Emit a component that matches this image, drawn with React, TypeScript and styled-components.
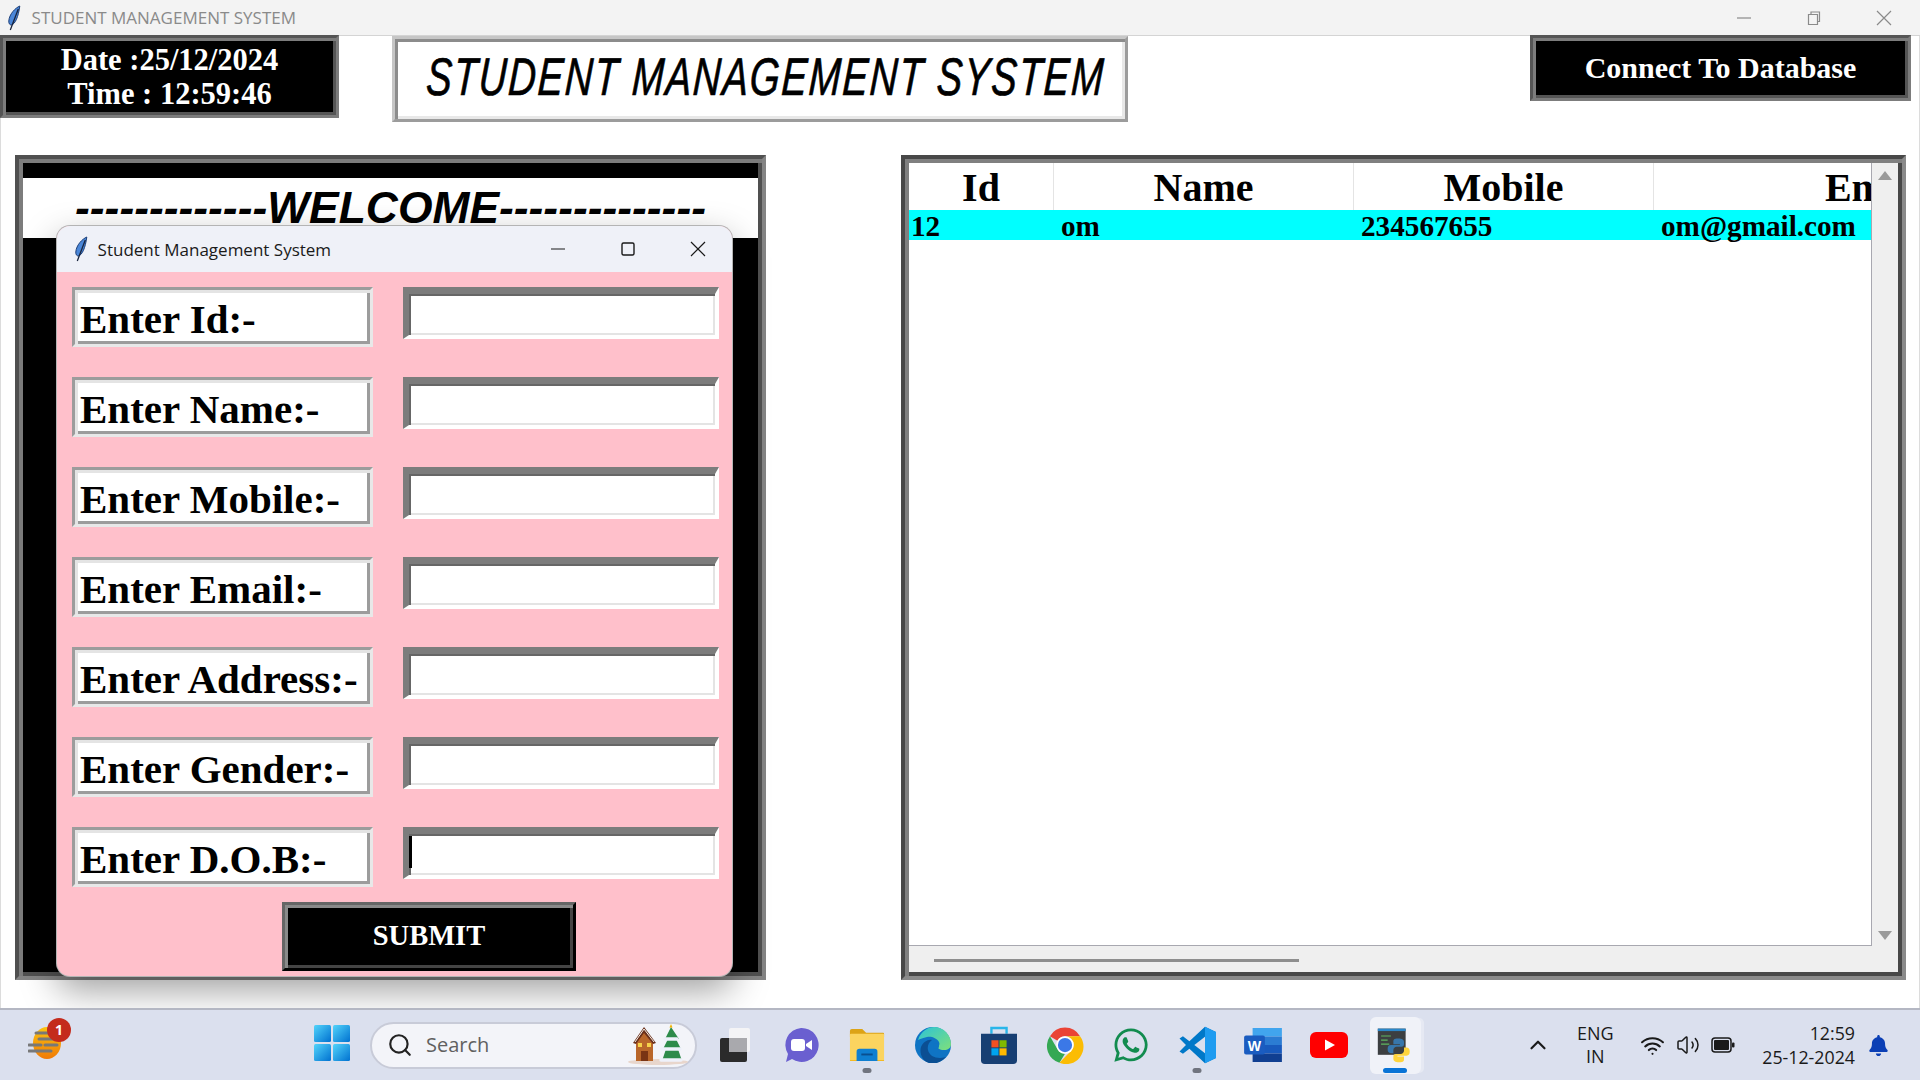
import { Fragment } from "react";
import styled, { createGlobalStyle, css } from "styled-components";
import { ChevronUp, Search, Volume2, Wifi } from "lucide-react";
import { FaWhatsapp, FaBell } from "react-icons/fa";

const GlobalStyle = createGlobalStyle`
  html, body { margin: 0; padding: 0; background: #fff; overflow: hidden; }
  * { box-sizing: border-box; }
`;

const SERIF = `"Liberation Serif", "Times New Roman", serif`;
const UI = `"Open Sans", "Noto Sans", sans-serif`;

// two tone tk style border: outer ring is the border, inner ring an inset shadow
const bevel = (w: number, outerTL: string, outerBR: string, innerTL: string, innerBR: string) => css`
  border: ${w}px solid;
  border-color: ${outerTL} ${outerBR} ${outerBR} ${outerTL};
  box-shadow: inset ${w}px ${w}px 0 ${innerTL}, inset -${w}px -${w}px 0 ${innerBR};
`;

const Page = styled.div`
  width: 1920px;
  height: 1080px;
  display: flex;
  flex-direction: column;
  font-family: ${SERIF};
`;

const TitleBar = styled.div`
  height: 36px;
  flex: none;
  background: #f3f3f3;
  border-bottom: 1px solid #d4d4d4;
  display: flex;
  align-items: center;
  padding-left: 6px;
  color: #8a8a8a;
  font: 400 17px/1 ${UI};
`;

const TitleText = styled.span`
  margin-left: 10px;
`;

const WindowControls = styled.div`
  margin-left: auto;
  display: flex;
  align-items: center;
  gap: 54px;
  padding-right: 28px;
  color: #888;
`;

const Main = styled.div`
  flex: 1;
  position: relative;
  background: #fff;
  border-left: 1px solid #dcdcdc;
  border-right: 1px solid #dcdcdc;
  min-height: 0;
`;

const TopRow = styled.div`
  display: flex;
  align-items: flex-start;
  padding-right: 8px;
`;

const ClockBox = styled.div`
  width: 339px;
  height: 83px;
  margin-top: -1px;
  margin-left: -1px;
  background: #000;
  ${bevel(3, "#555", "#7c7c7c", "#7c7c7c", "#555")}
  color: #fff;
  font-weight: 700;
  font-size: 30.5px;
  line-height: 34px;
  text-align: center;
  display: flex;
  flex-direction: column;
  justify-content: center;
`;

const AppHeading = styled.div`
  width: 736px;
  height: 86px;
  margin-left: 53px;
  background: #fff;
  ${bevel(3, "#c6c6c6", "#9c9c9c", "#8c8c8c", "#e8e8e8")}
  display: flex;
  align-items: center;
  justify-content: center;
  overflow: hidden;
`;

const HeadingText = styled.span`
  font: italic 400 46px/1 "Liberation Sans Narrow", "Liberation Sans", sans-serif;
  color: #000;
  white-space: nowrap;
  transform: translate(6px, -2px) scaleX(0.836) scaleY(1.15) skewX(-4deg);
  letter-spacing: 2px;
  -webkit-text-stroke: 0.6px #000;
`;

const ConnectButton = styled.button`
  margin-left: auto;
  margin-top: -1px;
  width: 381px;
  height: 66px;
  padding-bottom: 2px;
  background: #000;
  color: #fff;
  ${bevel(3, "#555", "#7c7c7c", "#7c7c7c", "#555")}
  font: 700 30px/1 ${SERIF};
`;

const PanelRow = styled.div`
  display: flex;
  align-items: flex-start;
  padding: 33px 0 0 14px;
`;

const WelcomeFrame = styled.div`
  width: 751px;
  height: 825px;
  background: #000;
  ${bevel(4, "#505050", "#848484", "#7c7c7c", "#505050")}
  padding-top: 19px;
  flex: none;
`;

const WelcomeStrip = styled.div`
  height: 60px;
  margin: 0 4px;
  background: #fff;
  text-align: center;
  font: italic 700 44.4px/60px "Liberation Sans", Arial, sans-serif;
  color: #000;
  white-space: nowrap;
  overflow: hidden;
`;

const TableFrame = styled.div`
  width: 1005px;
  height: 825px;
  margin-left: 135px;
  flex: none;
  ${bevel(4, "#484848", "#8a8a8a", "#808080", "#484848")}
  background: #efefef;
  padding: 4px;
  display: grid;
  grid-template-columns: minmax(0, 1fr) 26px;
  grid-template-rows: minmax(0, 1fr) 26px;
`;

const TableArea = styled.div`
  background: #fff;
  border-right: 1px solid #a8a8b0;
  border-bottom: 1px solid #a8a8b0;
  overflow: hidden;
  min-width: 0;
`;

const HeaderRow = styled.div`
  display: flex;
  height: 47px;
  overflow: hidden;
`;

const HeaderCell = styled.div<{ $w: number }>`
  width: ${(p) => p.$w}px;
  flex: none;
  border-right: 1px solid #e4e4e4;
  text-align: center;
  font: 700 40px/49px ${SERIF};
  color: #000;
  white-space: nowrap;
`;

const DataRow = styled.div`
  display: flex;
  height: 30px;
  background: #00ffff;
`;

const DataCell = styled.div<{ $w: number; $pad: number }>`
  width: ${(p) => p.$w}px;
  flex: none;
  padding-left: ${(p) => p.$pad}px;
  font: 700 29.2px/33px ${SERIF};
  color: #000;
  white-space: nowrap;
`;

const VScroll = styled.div`
  display: flex;
  flex-direction: column;
  justify-content: space-between;
  align-items: center;
  padding: 8px 0 6px;
`;

const Arrow = styled.div<{ $up?: boolean }>`
  width: 0;
  height: 0;
  border-left: 7px solid transparent;
  border-right: 7px solid transparent;
  ${(p) => (p.$up ? "border-bottom: 9px solid #9a9a9a;" : "border-top: 9px solid #9a9a9a;")}
`;

const HScroll = styled.div`
  grid-column: 1 / 3;
  padding: 13px 0 0 25px;
`;

const HThumb = styled.div`
  width: 365px;
  height: 3px;
  background: #8e8e8e;
`;

const Dialog = styled.div`
  position: absolute;
  left: 56px;
  top: 190px;
  width: 675px;
  height: 750px;
  border-radius: 13px;
  overflow: hidden;
  background: #ffc0cb;
  box-shadow: 0 0 0 1px #b4b4b4, 0 14px 36px rgba(0, 0, 0, 0.38);
`;

const DialogBar = styled.div`
  height: 46px;
  background: #eff1f8;
  display: flex;
  align-items: center;
  padding-left: 16px;
  font: 400 17px/1 ${UI};
  color: #1a1a1a;
`;

const DialogTitle = styled.span`
  margin-left: 9px;
`;

const DialogControls = styled.div`
  margin-left: auto;
  display: flex;
  align-items: center;
  gap: 54px;
  padding-right: 26px;
`;

const FormGrid = styled.div`
  display: grid;
  grid-template-columns: 301px 316px;
  column-gap: 30px;
  row-gap: 30px;
  grid-auto-rows: 60px;
  padding: 15px 0 0 15px;
`;

const FieldLabel = styled.div`
  background: #fff;
  ${bevel(3, "#9c9c9c", "#e8e8e8", "#e4e4e4", "#9c9c9c")}
  font: 700 41px/54px ${SERIF};
  padding: 2px 0 0 5px;
  color: #000;
  white-space: nowrap;
`;

const FieldInput = styled.div<{ $caret?: boolean }>`
  height: 52px;
  background: #fff;
  border-style: solid;
  border-width: 7px 4px 4px 6px;
  border-color: #7c7c7c #fff #fff #7c7c7c;
  box-shadow: inset 2px 2px 0 #666, inset -2px -2px 0 #e4e4e4;
  position: relative;
  &::after {
    content: "";
    display: ${(p) => (p.$caret ? "block" : "none")};
    position: absolute;
    left: 0;
    top: 2px;
    width: 3px;
    height: 32px;
    background: #000;
  }
`;

const SubmitButton = styled.button`
  display: block;
  margin: 15px 0 0 225px;
  width: 294px;
  height: 69px;
  background: #000;
  color: #fff;
  border-style: solid;
  border-width: 3px;
  border-color: #666 #000 #000 #666;
  box-shadow: inset 3px 3px 0 #8a8a8a, inset -3px -3px 0 #444;
  font: 700 28.5px/1 ${SERIF};
`;

const Taskbar = styled.div`
  height: 72px;
  flex: none;
  background: #dbe0ee;
  border-top: 2px solid #b4b7c3;
  display: flex;
  align-items: center;
  position: relative;
`;

const WeatherSlot = styled.div`
  width: 314px;
  padding-left: 28px;
  flex: none;
  position: relative;
`;

const Badge = styled.span`
  position: absolute;
  left: 47px;
  top: -8px;
  width: 24px;
  height: 24px;
  border-radius: 50%;
  background: #c42b1c;
  color: #fff;
  font: 700 14px/24px ${UI};
  text-align: center;
`;

const StartSlot = styled.div`
  width: 56px;
  flex: none;
`;

const SearchPill = styled.div`
  width: 327px;
  height: 47px;
  flex: none;
  background: #f3f4f9;
  border: 2px solid #c8cbd8;
  border-radius: 24px;
  display: flex;
  align-items: center;
  padding: 0 0 0 15px;
  color: #606060;
  font: 400 20px/1 ${UI};
  gap: 13px;
`;

const SearchArt = styled.div`
  margin-left: auto;
  margin-right: 6px;
  display: flex;
`;

const AppSlots = styled.div`
  display: flex;
  margin-left: 5px;
`;

const AppSlot = styled.div`
  width: 66px;
  height: 57px;
  flex: none;
  display: flex;
  align-items: center;
  justify-content: center;
  position: relative;
`;

const ActiveTile = styled.div`
  width: 51px;
  height: 57px;
  border-radius: 6px;
  background: #f0f2f8;
  box-shadow: 4px 0 0 -1px #e6e9f3;
  display: flex;
  align-items: center;
  justify-content: center;
`;

const RunDot = styled.span<{ $active?: boolean }>`
  position: absolute;
  bottom: 1px;
  left: 50%;
  transform: translateX(-50%);
  width: ${(p) => (p.$active ? 24 : 9)}px;
  height: 5px;
  border-radius: 3px;
  background: ${(p) => (p.$active ? "#0a74d6" : "#70747f")};
`;

const Tray = styled.div`
  margin-left: auto;
  display: flex;
  align-items: center;
  padding-right: 31px;
  color: #1a1a1a;
`;

const LangBox = styled.div`
  margin-left: 14px;
  width: 60px;
  text-align: center;
  font: 400 18px/23px ${UI};
`;

const TrayIcons = styled.div`
  margin-left: 15px;
  display: flex;
  align-items: center;
  gap: 11px;
`;

const TrayClock = styled.div`
  margin-left: 27px;
  text-align: right;
  font: 400 17.8px/24px ${UI};
`;

const BellWrap = styled.div`
  margin-left: 13px;
  display: flex;
  color: #0b3fb5;
`;

function Feather({ size = 26 }: { size?: number }) {
  return (
    <svg width={size * 0.6} height={size} viewBox="0 0 15 26">
      <path d="M13.5 1C9 3 3 9 2.5 16c-.2 2.5 1 4 2.5 4 4-1 7-8 8.500-19z" fill="#4a86d8" stroke="#1d3f78" strokeWidth="1" />
      <path d="M12 4 4 25" stroke="#17233d" strokeWidth="1.300" fill="none" />
    </svg>
  );
}

function WinStart() {
  return (
    <svg width="36" height="36" viewBox="0 0 36 36">
      <defs>
        <linearGradient id="ws" x1="0" y1="0" x2="1" y2="1">
          <stop offset="0" stopColor="#52d4fb" />
          <stop offset="1" stopColor="#0071d0" />
        </linearGradient>
      </defs>
      <rect x="0" y="0" width="17" height="17" rx="1.500" fill="url(#ws)" />
      <rect x="19" y="0" width="17" height="17" rx="1.500" fill="url(#ws)" />
      <rect x="0" y="19" width="17" height="17" rx="1.500" fill="url(#ws)" />
      <rect x="19" y="19" width="17" height="17" rx="1.500" fill="url(#ws)" />
    </svg>
  );
}

function WeatherIcon() {
  return (
    <svg width="34" height="34" viewBox="0 0 34 34">
      <defs>
        <linearGradient id="wo" x1="0" y1="0" x2="0" y2="1">
          <stop offset="0" stopColor="#fbc310" />
          <stop offset="1" stopColor="#f07a06" />
        </linearGradient>
      </defs>
      <ellipse cx="19" cy="17" rx="14" ry="16" fill="url(#wo)" />
      <g stroke="#787878" strokeWidth="3" strokeLinecap="round">
        <path d="M8 7h14M11 13h20M1 19h12M17 19h12M1 25h22" />
      </g>
    </svg>
  );
}

function HolidayArt() {
  return (
    <svg width="62" height="42" viewBox="0 0 62 42">
      <ellipse cx="31" cy="38" rx="30" ry="3" fill="#e8d6cc" />
      <path d="M9 17 17 6l9 11v20H9z" fill="#b9662a" />
      <path d="M6 19 17 3l12 16-3 1L17 9 9 20z" fill="#6b2f1a" />
      <path d="M8 18 17 5l10 13" fill="none" stroke="#f3efe9" strokeWidth="1" />
      <rect x="14" y="27" width="7" height="10" fill="#7a3414" />
      <rect x="11" y="19" width="4" height="4" fill="#f6d24a" />
      <rect x="20" y="19" width="4" height="4" fill="#f6d24a" />
      <path d="M44 3 38 15h3l-5 10h3l-4 12h20l-4-12h3l-5-10h3z" fill="#2e8b4a" />
      <path d="M38 15h12M35 25h18M34 36h20" stroke="#eef1fa" strokeWidth="3.500" strokeLinecap="round" />
      <path d="M44 0l1.500 3.500h-3z" fill="#f4b400" />
    </svg>
  );
}

function TaskView() {
  return (
    <svg width="30" height="34" viewBox="0 0 30 34">
      <rect x="0" y="10" width="27" height="24" rx="2" fill="#2b2b2b" />
      <rect x="9" y="0" width="21" height="24" rx="2" fill="#f4f4f6" />
      <rect x="9" y="10" width="18" height="14" fill="#a9a9ad" />
    </svg>
  );
}

function ChatIcon() {
  return (
    <svg width="36" height="36" viewBox="0 0 36 36">
      <path d="M18 1a17 17 0 1 1-9 31l-6 3 2-8A17 17 0 0 1 18 1z" fill="#6a5fd0" />
      <rect x="8" y="12" width="14" height="12" rx="3" fill="#fff" />
      <path d="M23 17l6-4v10l-6-4z" fill="#fff" />
    </svg>
  );
}

function FolderIcon() {
  return (
    <svg width="36" height="36" viewBox="0 0 38 36">
      <path d="M1 3a2 2 0 0 1 2-2h11l4 4h18a1 1 0 0 1 1 1v4H1z" fill="#dca316" />
      <rect x="1" y="6" width="36" height="29" rx="1" fill="#fbd45f" />
      <path d="M1 34h36v1H1z" fill="#f2b10d" />
      <path d="M8 35V25a3 3 0 0 1 3-3h16a3 3 0 0 1 3 3v10z" fill="#0f7fd1" />
      <rect x="13" y="27" width="12" height="2" fill="#0a4f8f" />
    </svg>
  );
}

function EdgeIcon() {
  return (
    <svg width="36" height="36" viewBox="0 0 36 36">
      <defs>
        <linearGradient id="eg" x1="0" y1="0" x2="1" y2="1">
          <stop offset="0" stopColor="#2bc3d8" />
          <stop offset="1" stopColor="#7fe07a" />
        </linearGradient>
      </defs>
      <circle cx="18" cy="18" r="18" fill="#0f74c4" />
      <path d="M3 13C6 4 13 0 19 0c10 0 17 8 17 17 0 4-3 6-7 6-5 0-6-2-6-3 1-1 2-3 1-5-2-4-8-6-12-5-4 1-7 2-9 3z" fill="url(#eg)" />
      <path d="M14 36c-6-2-10-9-8-16 2-5 7-8 11-7-3 2-5 6-4 10 1 5 6 8 12 8 3 0 5-1 6-1-4 4-10 8-17 6z" fill="#0b4f93" />
      <circle cx="21" cy="19" r="3" fill="#0f74c4" />
    </svg>
  );
}

function StoreIcon() {
  return (
    <svg width="36" height="38" viewBox="0 0 38 40">
      <path d="M11 8V2h16v6" fill="none" stroke="#29b6ea" strokeWidth="2.500" />
      <path d="M0 8h38v28a4 4 0 0 1-4 4H4a4 4 0 0 1-4-4z" fill="#173f73" />
      <rect x="11" y="15" width="7.500" height="7.500" fill="#f25022" />
      <rect x="19.500" y="15" width="7.500" height="7.500" fill="#7fba00" />
      <rect x="11" y="23.500" width="7.500" height="7.500" fill="#00a4ef" />
      <rect x="19.500" y="23.500" width="7.500" height="7.500" fill="#ffb900" />
    </svg>
  );
}

function ChromeIcon() {
  return (
    <svg width="38" height="38" viewBox="0 0 48 48">
      <path d="M24 2A22 22 0 0 1 43 13H24a11 11 0 0 0-9.500 5.500L5 13A22 22 0 0 1 24 2z" fill="#ea4335" />
      <path d="M5 13l9.500 16.500A11 11 0 0 0 24 35l-7 11.500A22 22 0 0 1 5 13z" fill="#34a853" />
      <path d="M43 13A22 22 0 0 1 17 46.500L33.500 29.500A11 11 0 0 0 24 13z" fill="#fbbc04" />
      <circle cx="24" cy="24" r="11" fill="#fff" />
      <circle cx="24" cy="24" r="9" fill="#3b78e7" />
    </svg>
  );
}

function VsCodeIcon() {
  return (
    <svg width="38" height="38" viewBox="0 0 100 100">
      <path d="M71 2 100 16v68L71 98 30 60l-17 13-9-6 17-17L4 33l9-6 17 13z" fill="#0078c8" />
      <path d="M71 2 100 16v68L71 98z" fill="#1f9cf0" />
      <path d="M71 28 43 50l28 22z" fill="#dbe0ee" />
    </svg>
  );
}

function WordIcon() {
  return (
    <svg width="38" height="34" viewBox="0 0 40 36">
      <rect x="9" y="0" width="31" height="9" fill="#41a5ee" />
      <rect x="9" y="9" width="31" height="9" fill="#2b7cd3" />
      <rect x="9" y="18" width="31" height="9" fill="#185abd" />
      <rect x="9" y="27" width="31" height="9" fill="#103f91" />
      <rect x="0" y="8" width="22" height="20" rx="2" fill="#1a5cc0" />
      <text x="11" y="24" textAnchor="middle" fontFamily="Liberation Sans, sans-serif" fontWeight="700" fontSize="15" fill="#fff">W</text>
    </svg>
  );
}

function YoutubeIcon() {
  return (
    <svg width="38" height="26" viewBox="0 0 38 26">
      <rect width="38" height="26" rx="6" fill="#f00" />
      <path d="M15 7.500l10 5.500-10 5.500z" fill="#fff" />
    </svg>
  );
}

function PythonIcon() {
  return (
    <svg width="36" height="36" viewBox="0 0 44 44">
      <rect x="1" y="2" width="34" height="32" fill="#3c3f41" />
      <rect x="1" y="2" width="34" height="3" fill="#2a86c9" />
      <path d="M5 11h12M5 16h8M5 21h10" stroke="#5fb760" strokeWidth="1.500" />
      <path d="M26 14c-6 0-6 2-6 4v3h8v1H17c-3 0-4 2-4 5s1 5 4 5h3v-4c0-2 2-4 4-4h6c2 0 3-1 3-3v-3c0-2-2-4-7-4z" fill="#3776ab" />
      <path d="M27 43c6 0 6-2 6-4v-3h-8v-1h11c3 0 4-2 4-5s-1-5-4-5h-3v4c0 2-2 4-4 4h-6c-2 0-3 1-3 3v3c0 2 2 4 7 4z" fill="#ffd43b" />
    </svg>
  );
}

function BatteryIcon() {
  return (
    <svg width="24" height="16" viewBox="0 0 24 16">
      <rect x="1" y="1" width="19" height="14" rx="3" fill="none" stroke="#1a1a1a" strokeWidth="1.500" />
      <rect x="3" y="3" width="15" height="10" rx="1" fill="#1a1a1a" />
      <rect x="21" y="5.500" width="2.500" height="5" rx="1" fill="#1a1a1a" />
    </svg>
  );
}

function ControlIcons({ light }: { light?: boolean }) {
  const c = light ? "#8a8a8a" : "#1a1a1a";
  return (
    <>
      <svg width="16" height="16" viewBox="0 0 16 16"><path d="M1 8h14" stroke={c} strokeWidth="1.200" /></svg>
      <svg width="16" height="16" viewBox="0 0 16 16">
        {light ? (
          <path d="M2.500 4.500h9v10h-9zM5 4.500V2h8.500v9.500h-2" fill="none" stroke={c} strokeWidth="1.200" />
        ) : (
          <rect x="2" y="2" width="12" height="12" rx="1.500" fill="none" stroke={c} strokeWidth="1.400" />
        )}
      </svg>
      <svg width="16" height="16" viewBox="0 0 16 16"><path d="M1 1l14 14M15 1 1 15" stroke={c} strokeWidth="1.200" /></svg>
    </>
  );
}

const FIELDS = ["Enter Id:-", "Enter Name:-", "Enter Mobile:-", "Enter Email:-", "Enter Address:-", "Enter Gender:-", "Enter D.O.B:-"];

export default function App() {
  return (
    <Page>
      <GlobalStyle />
      <TitleBar>
        <Feather />
        <TitleText>STUDENT MANAGEMENT SYSTEM</TitleText>
        <WindowControls><ControlIcons light /></WindowControls>
      </TitleBar>

      <Main>
        <TopRow>
          <ClockBox>
            <div>Date :25/12/2024</div>
            <div>Time : 12:59:46</div>
          </ClockBox>
          <AppHeading>
            <HeadingText>STUDENT MANAGEMENT SYSTEM</HeadingText>
          </AppHeading>
          <ConnectButton>Connect To Database</ConnectButton>
        </TopRow>

        <PanelRow>
          <WelcomeFrame>
            <WelcomeStrip>-------------WELCOME--------------</WelcomeStrip>
          </WelcomeFrame>
          <TableFrame>
            <TableArea>
              <HeaderRow>
                <HeaderCell $w={145}>Id</HeaderCell>
                <HeaderCell $w={300}>Name</HeaderCell>
                <HeaderCell $w={300}>Mobile</HeaderCell>
                <HeaderCell $w={445}>Email</HeaderCell>
              </HeaderRow>
              <DataRow>
                <DataCell $w={146} $pad={2}>12</DataCell>
                <DataCell $w={300} $pad={6}>om</DataCell>
                <DataCell $w={300} $pad={6}>234567655</DataCell>
                <DataCell $w={200} $pad={6}>om@gmail.com</DataCell>
              </DataRow>
            </TableArea>
            <VScroll>
              <Arrow $up />
              <Arrow />
            </VScroll>
            <HScroll><HThumb /></HScroll>
          </TableFrame>
        </PanelRow>

        <Dialog>
          <DialogBar>
            <Feather />
            <DialogTitle>Student Management System</DialogTitle>
            <DialogControls><ControlIcons /></DialogControls>
          </DialogBar>
          <FormGrid>
            {FIELDS.map((f, i) => (
              <Fragment key={f}>
                <FieldLabel>{f}</FieldLabel>
                <FieldInput $caret={i === FIELDS.length - 1} />
              </Fragment>
            ))}
          </FormGrid>
          <SubmitButton>SUBMIT</SubmitButton>
        </Dialog>
      </Main>

      <Taskbar>
        <WeatherSlot>
          <WeatherIcon />
          <Badge>1</Badge>
        </WeatherSlot>
        <StartSlot><WinStart /></StartSlot>
        <SearchPill>
          <Search size={26} color="#222" strokeWidth={2} />
          <span>Search</span>
          <SearchArt><HolidayArt /></SearchArt>
        </SearchPill>
        <AppSlots>
          <AppSlot><TaskView /></AppSlot>
          <AppSlot><ChatIcon /></AppSlot>
          <AppSlot><FolderIcon /><RunDot /></AppSlot>
          <AppSlot><EdgeIcon /></AppSlot>
          <AppSlot><StoreIcon /></AppSlot>
          <AppSlot><ChromeIcon /></AppSlot>
          <AppSlot><FaWhatsapp size={38} color="#128c4f" /></AppSlot>
          <AppSlot><VsCodeIcon /><RunDot /></AppSlot>
          <AppSlot><WordIcon /></AppSlot>
          <AppSlot><YoutubeIcon /></AppSlot>
          <AppSlot>
            <ActiveTile><PythonIcon /></ActiveTile>
            <RunDot $active />
          </AppSlot>
        </AppSlots>
        <Tray>
          <ChevronUp size={26} strokeWidth={2} />
          <LangBox>ENG<br />IN</LangBox>
          <TrayIcons>
            <Wifi size={25} strokeWidth={2} />
            <Volume2 size={24} strokeWidth={1.500} />
            <BatteryIcon />
          </TrayIcons>
          <TrayClock>12:59<br />25-12-2024</TrayClock>
          <BellWrap><FaBell size={21} /></BellWrap>
        </Tray>
      </Taskbar>
    </Page>
  );
}
